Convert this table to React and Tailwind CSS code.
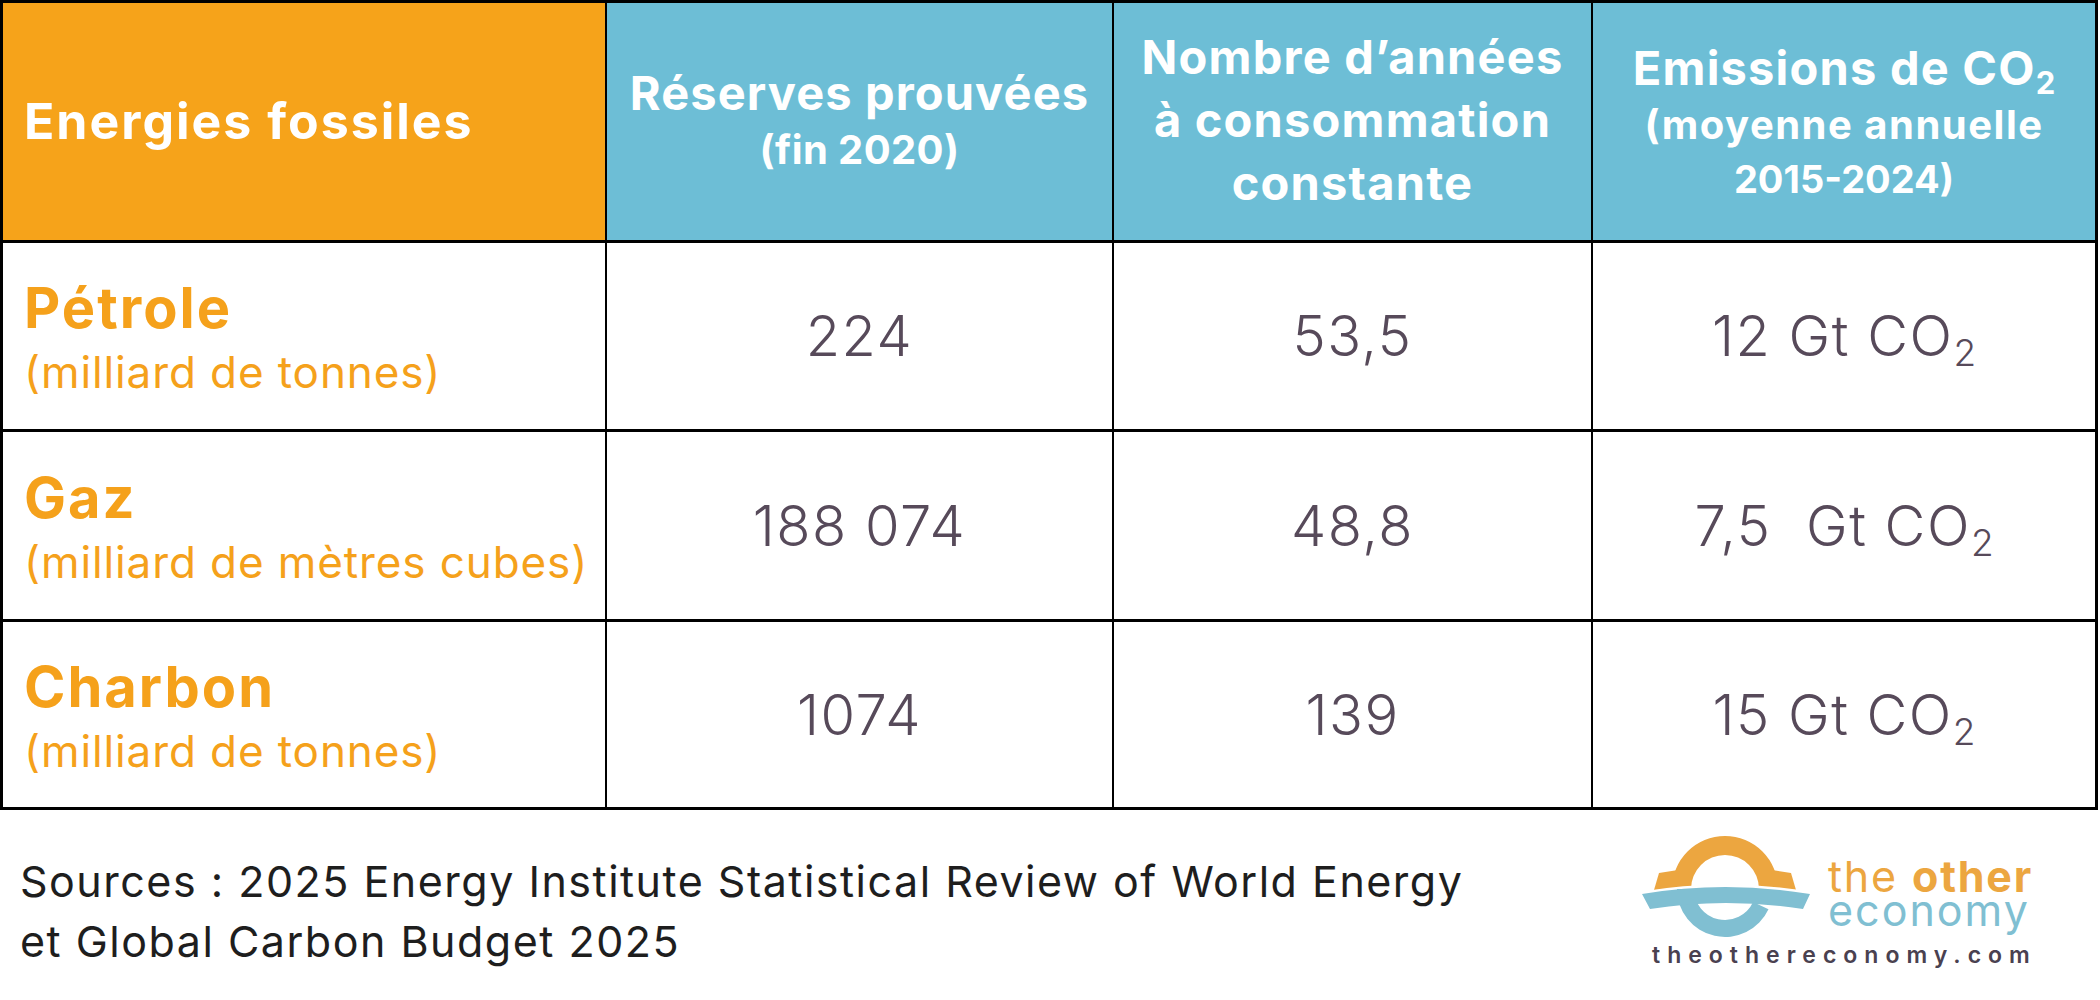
import React from "react";

const F = "font-[family-name:Inter,sans-serif]";

function Sub({ children, className = "" }) {
  return <span className={`text-[0.66em] align-[-0.28em] leading-[0] tracking-normal ${className}`}>{children}</span>;
}

function Logo() {
  return (
    <div className="flex flex-col mt-[22px] mr-[68px] w-[392px]">
      <div className="flex items-start">
        <svg width="175" height="108" viewBox="0 0 175 108" className="shrink-0">
          <path d="M 32 57 A 53 53 0 0 1 138 57 L 119 57 A 34 34 0 0 0 51 57 Z" fill="#eca640" />
          <path d="M 19 41 L 38 38 L 40 57 L 14 58 Z" fill="#eca640" />
          <path d="M 151 41 L 132 38 L 130 57 L 156 58 Z" fill="#eca640" />
          <path d="M 2 62 Q 85 48 170 62 L 163 77 Q 85 65 10 77 Z" fill="#ffffff" stroke="#ffffff" strokeWidth="5" />
          <path d="M 37 57 A 48 48 0 0 0 128.5 77.3 L 113.1 70.1 A 31 31 0 0 1 54 57 Z" fill="#80bfd2" />
          <path d="M 2 62 Q 85 48 170 62 L 163 77 Q 85 65 10 77 Z" fill="#80bfd2" />
        </svg>
        <div className={`${F} ml-[13px] mt-[28px] w-[204px] flex flex-col text-[43px] leading-[32px]`}>
          <div className="flex text-[#eca640] whitespace-nowrap tracking-[1.8px]">
            <span>the</span>
            <span className="ml-[14px] font-bold">other</span>
          </div>
          <div className="text-[#80bfd2] mt-[2px] tracking-[2px]">economy</div>
        </div>
      </div>
      <div className={`${F} ml-[12px] mt-[2px] text-[23px] leading-[26px] font-semibold tracking-[7px] text-[#4a4150] whitespace-nowrap`}>
        theothereconomy.com
      </div>
    </div>
  );
}

function HeadCell({ children, bg, border = true, className = "" }) {
  return (
    <div
      className={`${bg} ${border ? "border-r-2 border-black" : ""} flex flex-col justify-center text-white font-bold ${className}`}
    >
      {children}
    </div>
  );
}

function LabelCell({ name, unit }) {
  return (
    <div className="border-r-2 border-black flex flex-col justify-center pl-[21px] pt-[4px] text-[#f5a11b]">
      <div className="text-[56px] leading-[68px] font-bold tracking-[2px]">{name}</div>
      <div className="text-[44px] leading-[60px] font-normal tracking-[0.9px] whitespace-nowrap">{unit}</div>
    </div>
  );
}

function NumCell({ children, border = true }) {
  return (
    <div
      className={`${border ? "border-r-2 border-black" : ""} flex items-center justify-center text-[56px] font-light tracking-[1.5px] text-[#574a5a] whitespace-pre`}
    >
      <span>{children}</span>
    </div>
  );
}

const rows = [
  { name: "Pétrole", unit: "(milliard de tonnes)", a: "224", b: "53,5", c: "12 Gt CO", h: "h-[189px] border-b-[3px]" },
  { name: "Gaz", unit: "(milliard de mètres cubes)", a: "188 074", b: "48,8", c: "7,5  Gt CO", h: "h-[190px] border-b-[3px]" },
  { name: "Charbon", unit: "(milliard de tonnes)", a: "1074", b: "139", c: "15 Gt CO", h: "h-[185px]" },
];

export default function App() {
  return (
    <div className={`${F} w-[2100px] h-[1000px] bg-white overflow-hidden`}>
      <div className="w-[2098px] border-[3px] border-black">
        <div className="grid grid-cols-[604px_507px_479px_502px] h-[240px] border-b-[3px] border-black">
          <HeadCell bg="bg-[#f6a31a]" className="pl-[21px] text-[50px] tracking-[2px]">
            <span>Energies fossiles</span>
          </HeadCell>
          <HeadCell bg="bg-[#6dbed6]" className="items-center pb-[2px]">
            <span className="text-[47px] leading-[57px] tracking-[1.1px]">Réserves prouvées</span>
            <span className="text-[40px] leading-[57px] tracking-[0.4px]">(fin 2020)</span>
          </HeadCell>
          <HeadCell bg="bg-[#6dbed6]" className="items-center text-[47px] leading-[63px] tracking-[1.2px] pb-[4px]">
            <span>Nombre d’années</span>
            <span>à consommation</span>
            <span>constante</span>
          </HeadCell>
          <HeadCell bg="bg-[#6dbed6]" border={false} className="items-center">
            <span className="text-[47px] leading-[60px] tracking-[1.2px]">
              Emissions de CO<Sub>2</Sub>
            </span>
            <span className="text-[40px] leading-[54px] tracking-[1.5px]">(moyenne annuelle</span>
            <span className="text-[38px] leading-[54px]">2015-2024)</span>
          </HeadCell>
        </div>
        {rows.map((r) => (
          <div key={r.name} className={`grid grid-cols-[604px_507px_479px_502px] ${r.h} border-black`}>
            <LabelCell name={r.name} unit={r.unit} />
            <NumCell>{r.a}</NumCell>
            <NumCell>{r.b}</NumCell>
            <NumCell border={false}>
              {r.c}
              <Sub>2</Sub>
            </NumCell>
          </div>
        ))}
      </div>
      <div className="flex justify-between items-start">
        <div className="mt-[41px] ml-[20px] text-[43px] leading-[60px] tracking-[1.5px] text-[#1e1e1e] whitespace-nowrap">
          <div>Sources : 2025 Energy Institute Statistical Review of World Energy</div>
          <div>et Global Carbon Budget 2025</div>
        </div>
        <Logo />
      </div>
    </div>
  );
}
